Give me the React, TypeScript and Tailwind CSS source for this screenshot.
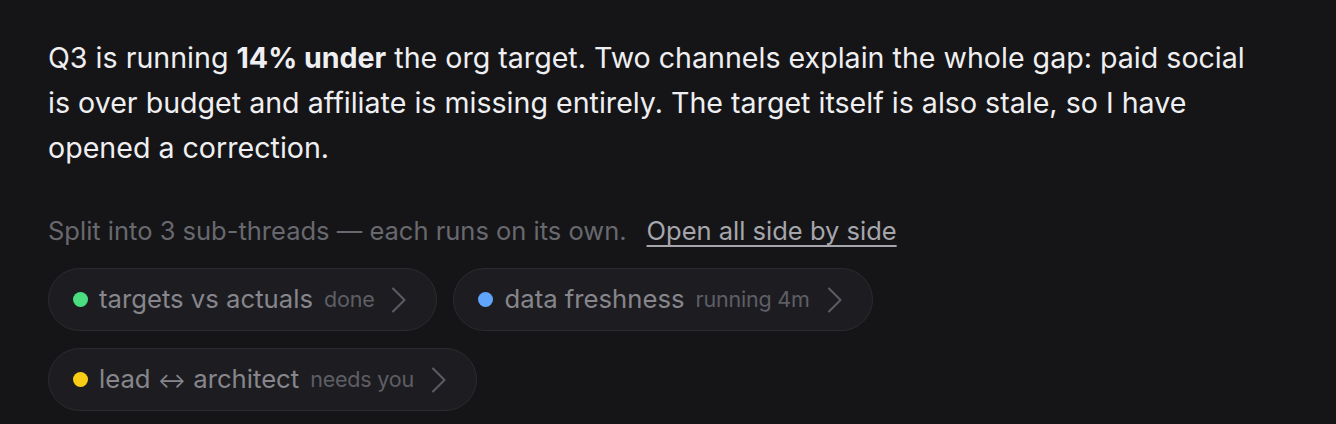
import React from "react"

type Thread = {
  color: string
  label: React.ReactNode
  status: string
}

const threads: Thread[] = [
  { color: "bg-[#4ade80]", label: "targets vs actuals", status: "done" },
  { color: "bg-[#60a5fa]", label: "data freshness", status: "running 4m" },
  {
    color: "bg-[#facc15]",
    label: (
      <>
        lead <span className="text-[21px]">↔</span> architect
      </>
    ),
    status: "needs you",
  },
]

const Chevron = () => (
  <svg width="16" height="26" viewBox="0 0 16 26" fill="none" className="shrink-0">
    <path d="M2 1.5 L13.5 13 L2 24.5" stroke="#5c5c63" strokeWidth="2" strokeLinecap="round" strokeLinejoin="round" />
  </svg>
)

const ThreadChip = ({ thread }: { thread: Thread }) => (
  <button className="flex h-[63px] items-center rounded-full border-[1.5px] border-[#2b2b30] bg-[#1d1d21] pl-6 pr-[29px]">
    <span className={`h-[15px] w-[15px] shrink-0 rounded-full ${thread.color}`} />
    <span className="ml-[11px] text-[25.7px] text-[#86868c]">{thread.label}</span>
    <span className="ml-[11px] text-[21.5px] tracking-[-0.2px] text-[#5e5e65]">{thread.status}</span>
    <span className="ml-[17px] flex items-center">
      <Chevron />
    </span>
  </button>
)

export default function App() {
  return (
    <div
      className="min-h-[424px] w-full bg-[#151517] px-12 pt-[35px]"
      style={{ fontFamily: "Inter, 'Noto Sans', sans-serif" }}
    >
      <p className="max-w-[1220px] text-[28.6px] leading-[45px] text-[#efeff1]">
        Q3 is running <strong className="font-bold">14% under</strong> the org target. Two channels explain the whole
        gap: paid social is over budget and affiliate is missing entirely. The target itself is also stale, so I have
        opened a correction.
      </p>

      <div className="mt-[43px] flex items-center text-[25.5px] leading-[36px]">
        <span className="text-[#68686f]">Split into 3 sub-threads — each runs on its own.</span>
        <a className="ml-5 text-[#a6a6ad] underline decoration-2 underline-offset-[5px]">Open all side by side</a>
      </div>

      <div className="mt-[19px] flex flex-wrap gap-x-4 gap-y-[17px]">
        {threads.map((t) => (
          <ThreadChip key={t.status} thread={t} />
        ))}
      </div>
    </div>
  )
}
